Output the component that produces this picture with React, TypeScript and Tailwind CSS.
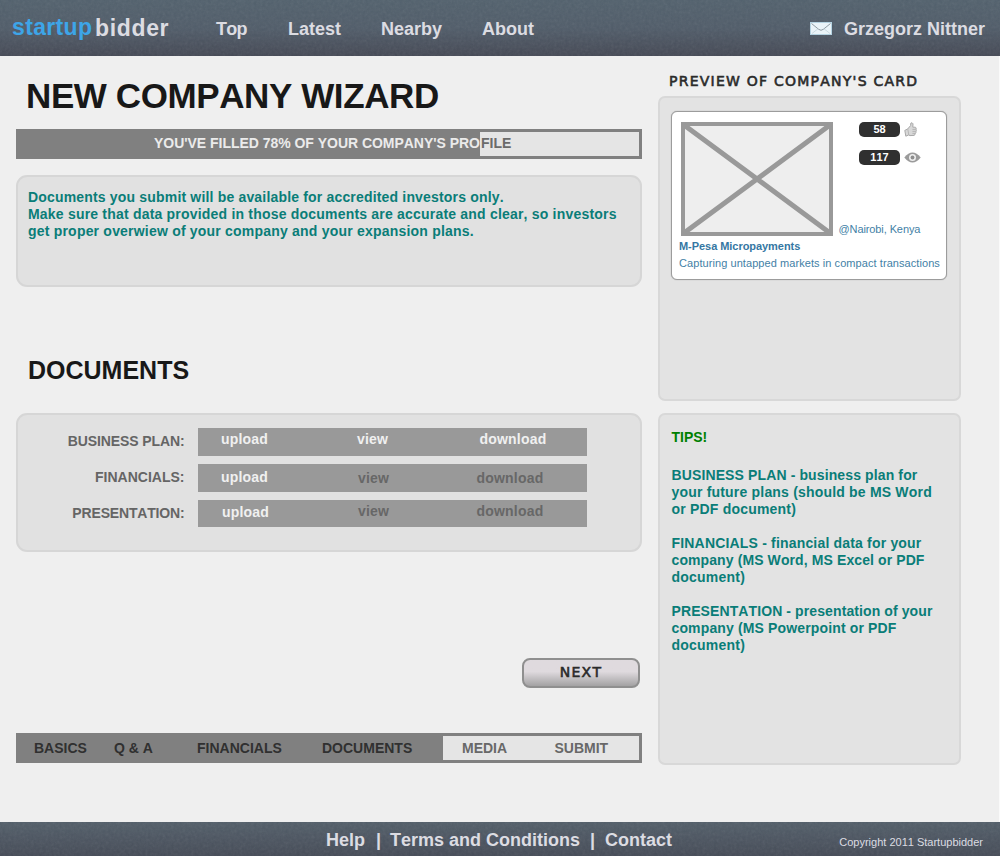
import React from "react";

type Tone = "dark" | "light";

function Texture({ id, height }: { id: string; height: number }) {
  return (
    <svg className="pointer-events-none absolute inset-0 h-full w-full opacity-[0.1]" aria-hidden="true">
      <filter id={id} x="0" y="0" width="100%" height="100%">
        <feTurbulence type="fractalNoise" baseFrequency="0.35" numOctaves="3" seed="7" />
        <feColorMatrix type="saturate" values="0" />
      </filter>
      <rect width="1000" height={height} filter={`url(#${id})`} />
    </svg>
  );
}

function MailIcon() {
  return (
    <svg width="22" height="13" viewBox="0 0 22 13" className="block">
      <rect x="0.5" y="0.5" width="21" height="12" fill="#eaf4f9" stroke="#b5d3e2" />
      <path d="M1.5 1.5 L8.5 7.2 Q11 9.4 13.5 7.2 L20.5 1.5" fill="none" stroke="#8d9aa2" strokeWidth="1" />
      <path d="M2 11.5 L8 6.8 M20 11.5 L14 6.8" stroke="#c3d4dc" strokeWidth="0.8" />
    </svg>
  );
}

function ThumbIcon() {
  return (
    <svg width="13" height="15" viewBox="0 0 13 15" className="block">
      <path
        d="M0.8 8.4 L3.6 7 L6.6 3.6 L6.8 1.2 Q8.2 0 9 1.8 L8.8 5.2 L11.4 5.2 Q12.6 5.8 12 7.2 Q12.7 8.2 12 9.2 Q12.4 10.4 11.4 11.2 Q11.4 12.8 10 13.4 L6 13.6 L4.6 13 L1.8 14.2 Z"
        fill="#d8d8d8"
        stroke="#a8a8a8"
        strokeWidth="1"
        strokeLinejoin="round"
      />
      <path d="M3.8 7.2 L4.8 12.8 M8.4 7.4 H11.6 M8.4 9.4 H11.6 M8.4 11.4 H11" stroke="#a8a8a8" strokeWidth="0.7" />
    </svg>
  );
}

function EyeIcon() {
  return (
    <svg width="17" height="11" viewBox="0 0 17 11" className="block">
      <path d="M0.3 5.5 Q8.5 -4.6 16.7 5.5 Q8.5 15.6 0.3 5.5 Z" fill="#9b9b9b" />
      <circle cx="8.5" cy="5.5" r="3.5" fill="#eeeeee" />
      <circle cx="8.5" cy="5.5" r="1.9" fill="#8d8d8d" />
    </svg>
  );
}

function Header() {
  return (
    <header className="relative h-14 bg-linear-to-b from-[#52616d] via-[#505c69] to-[#454955]">
      <Texture id="grain-top" height={56} />
      <div className="relative flex h-full items-start text-lg leading-5 font-bold text-[#dcdce2]">
        <div className="ml-[12px] flex w-[204px] text-[23px] leading-7">
          <span className="mt-[13px] w-[83px] tracking-[0.35px] text-[#3da5e8]">startup</span>
          <span className="mt-[14px] tracking-[0.65px]">bidder</span>
        </div>
        <nav className="mt-[19px] flex">
          <a className="w-[72px] tracking-[-0.7px]">Top</a>
          <a className="w-[93px]">Latest</a>
          <a className="w-[101px]">Nearby</a>
          <a>About</a>
        </nav>
        <div className="mt-[19px] mr-[15px] ml-auto flex">
          <span className="mt-[3px] mr-[12px]">
            <MailIcon />
          </span>
          <span>Grzegorz Nittner</span>
        </div>
      </div>
    </header>
  );
}

const docs: {
  label: string;
  labelClass: string;
  barClass: string;
  uploadClass: string;
  viewClass: string;
  downloadClass: string;
  tone: Tone;
}[] = [
  {
    label: "BUSINESS PLAN:",
    labelClass: "pt-[5px] tracking-[-0.1px]",
    barClass: "h-7",
    uploadClass: "ml-[23px] mt-[3px] w-[136px]",
    viewClass: "mt-[3px] w-[122.5px]",
    downloadClass: "mt-[3px]",
    tone: "light",
  },
  {
    label: "FINANCIALS:",
    labelClass: "pt-[5px]",
    barClass: "h-7",
    uploadClass: "ml-[23px] mt-[5px] w-[137px]",
    viewClass: "mt-[6px] w-[118.5px]",
    downloadClass: "mt-[6px]",
    tone: "dark",
  },
  {
    label: "PRESENTATION:",
    labelClass: "pt-[5px] tracking-[-0.17px]",
    barClass: "h-[27px]",
    uploadClass: "ml-[24px] mt-[4px] w-[136px]",
    viewClass: "mt-[3px] w-[118.5px]",
    downloadClass: "mt-[3px]",
    tone: "dark",
  },
];

function Documents() {
  return (
    <section className="mt-[28px] flex h-[139px] flex-col gap-2 rounded-[11px] border-2 border-[#d6d6d6] bg-[#e1e1e1] pt-[13px]">
      {docs.map((d) => (
        <div key={d.label} className="flex">
          <div className={`w-[166.5px] text-right text-[#656565] ${d.labelClass}`}>{d.label}</div>
          <div className={`ml-[13.5px] flex w-[389px] bg-[#999999] tracking-[0.2px] ${d.barClass}`}>
            <a className={`text-[#f0f0f0] ${d.uploadClass}`}>upload</a>
            <a className={`${d.tone === "light" ? "text-[#f0f0f0]" : "text-[#676767]"} ${d.viewClass}`}>view</a>
            <a className={`${d.tone === "light" ? "text-[#f0f0f0]" : "text-[#676767]"} ${d.downloadClass}`}>
              download
            </a>
          </div>
        </div>
      ))}
    </section>
  );
}

function Main() {
  return (
    <main className="ml-4 w-[626px] pt-5">
      <h1 className="ml-[10px] text-[35px] leading-10 tracking-[-0.4px] whitespace-nowrap text-[#181818]">
        NEW COMPANY WIZARD
      </h1>
      <div className="mt-[13px] flex h-[30px] border-[3px] border-[#808080] bg-[#e5e5e5] whitespace-nowrap">
        <div className="w-[461px] shrink-0 bg-[#808080] pt-[3px] pl-[135px] tracking-[-0.03px] text-[#ebebeb]">
          YOU'VE FILLED 78% OF YOUR COMPANY'S PRO
        </div>
        <div className="pt-[3px] pl-px text-[#6b6b6b]">FILE</div>
      </div>
      <section className="mt-4 h-[112px] rounded-[11px] border-2 border-[#d6d6d6] bg-[#e1e1e1] pt-3 pl-[10px] whitespace-nowrap text-[#0a7d78]">
        <p className="tracking-[0.175px]">Documents you submit will be available for accredited investors only.</p>
        <p className="tracking-[0.2px]">
          Make sure that data provided in those documents are accurate and clear, so investors
        </p>
        <p className="tracking-[0.205px]">get proper overwiew of your company and your expansion plans.</p>
      </section>
      <h2 className="mt-[68px] ml-[12px] text-[25px] leading-[30px] text-[#181818]">DOCUMENTS</h2>
      <Documents />
      <div className="mt-[106px] flex justify-end pr-[2px]">
        <button className="h-[30px] w-[118px] rounded-[8px] border-2 border-[#8f8f8f] bg-linear-to-b from-[#dfdade] from-45% to-[#a3a2a3] pb-[2px] font-['DejaVu_Sans',sans-serif] font-normal tracking-[1.3px] text-[#2b2b2b] [-webkit-text-stroke:0.6px_#2b2b2b]">
          NEXT
        </button>
      </div>
      <nav className="mt-[45px] flex h-[30px] border-[3px] border-[#808080] bg-[#e5e5e5] whitespace-nowrap">
        <div className="flex w-[424px] bg-[#808080] pt-1 pl-[15px] text-[#303030]">
          <a className="w-[80px]">BASICS</a>
          <a className="w-[83px]">Q &amp; A</a>
          <a className="w-[125px]">FINANCIALS</a>
          <a>DOCUMENTS</a>
        </div>
        <div className="flex pt-1 pl-[19px] text-[#686868]">
          <a className="w-[92.5px]">MEDIA</a>
          <a>SUBMIT</a>
        </div>
      </nav>
    </main>
  );
}

function Stat({ value, children }: { value: string; children: React.ReactNode }) {
  return (
    <div className="flex h-[15px] items-center">
      <span className="flex h-[15px] w-[41px] items-center justify-center rounded-[5px] bg-[#303030] text-[11px] leading-[15px] text-white">
        {value}
      </span>
      <span className="ml-1">{children}</span>
    </div>
  );
}

function Card() {
  return (
    <div className="h-[169px] w-[276px] rounded-[6px] border border-[#9c9c9c] bg-white text-[11px] leading-[13px] whitespace-nowrap text-[#437fa6] shadow-[0_0_1px_#999]">
      <div className="flex pt-[10px] pl-[9px]">
        <svg width="152" height="114" viewBox="0 0 152 114" className="block shrink-0">
          <rect x="2" y="2" width="148" height="110" fill="#eeeeee" stroke="#999999" strokeWidth="4" />
          <path d="M3 3 L149 111 M149 3 L3 111" stroke="#999999" strokeWidth="5" />
        </svg>
        <div className="flex flex-col">
          <div className="flex flex-col gap-[13px] pl-[26px]">
            <Stat value="58">
              <ThumbIcon />
            </Stat>
            <Stat value="117">
              <EyeIcon />
            </Stat>
          </div>
          <div className="mt-[58px] pl-[5.5px] font-normal tracking-[-0.1px]">@Nairobi, Kenya</div>
        </div>
      </div>
      <p className="mt-[4px] ml-[7px] tracking-[-0.05px] text-[#3577a3]">M-Pesa Micropayments</p>
      <p className="mt-1 ml-[7px] font-normal tracking-[0.07px]">Capturing untapped markets in compact transactions</p>
    </div>
  );
}

function Sidebar() {
  return (
    <aside className="ml-4 w-[303px] pt-[17px]">
      <h3 className="ml-[11px] font-['DejaVu_Sans',sans-serif] font-normal tracking-[1.24px] whitespace-nowrap text-[#2b2b2b] [-webkit-text-stroke:0.6px_#2b2b2b]">
        PREVIEW OF COMPANY'S CARD
      </h3>
      <section className="mt-[6px] h-[305px] rounded-[7px] border-2 border-[#d8d8d8] bg-[#e3e3e3] pt-[13px] pl-[11px]">
        <Card />
      </section>
      <section className="mt-3 h-[352px] rounded-[7px] border-2 border-[#d8d8d8] bg-[#e3e3e3] pt-[14px] pl-[11.5px] whitespace-nowrap text-[#0a7d78]">
        <p className="text-[#008000]">TIPS!</p>
        <div className="mt-[21px]">
          <p className="tracking-[0.12px]">BUSINESS PLAN - business plan for</p>
          <p className="tracking-[0.19px]">your future plans (should be MS Word</p>
          <p className="tracking-[0.2px]">or PDF document)</p>
        </div>
        <div className="mt-[17px]">
          <p className="tracking-[0.18px]">FINANCIALS - financial data for your</p>
          <p className="tracking-[0.1px]">company (MS Word, MS Excel or PDF</p>
          <p className="tracking-[0.22px]">document)</p>
        </div>
        <div className="mt-[17px]">
          <p className="tracking-[0.1px]">PRESENTATION - presentation of your</p>
          <p className="tracking-[0.14px]">company (MS Powerpoint or PDF</p>
          <p className="tracking-[0.22px]">document)</p>
        </div>
      </section>
    </aside>
  );
}

function Footer() {
  return (
    <footer className="relative h-[34px] bg-linear-to-b from-[#525e69] to-[#454b57]">
      <Texture id="grain-bottom" height={34} />
      <div className="relative flex h-full text-lg leading-5 whitespace-nowrap text-[#dcdce2]">
        <div className="mt-[8px] ml-[326px] flex">
          <a className="w-[50px]">Help</a>
          <span className="w-[14px]">|</span>
          <a className="w-[200px]">Terms and Conditions</a>
          <span className="w-[15px]">|</span>
          <a>Contact</a>
        </div>
        <small className="mt-[14px] mr-[17px] ml-auto text-[11px] leading-[13px] font-normal">
          Copyright 2011 Startupbidder
        </small>
      </div>
    </footer>
  );
}

export default function App() {
  return (
    <div className="flex h-[856px] w-[1000px] flex-col overflow-hidden bg-[#efefef] font-['Liberation_Sans',Arial,sans-serif] text-sm leading-[17px] font-bold [font-kerning:none]">
      <Header />
      <div className="flex h-[766px] border-r border-[#fafafa]">
        <Main />
        <Sidebar />
      </div>
      <Footer />
    </div>
  );
}
